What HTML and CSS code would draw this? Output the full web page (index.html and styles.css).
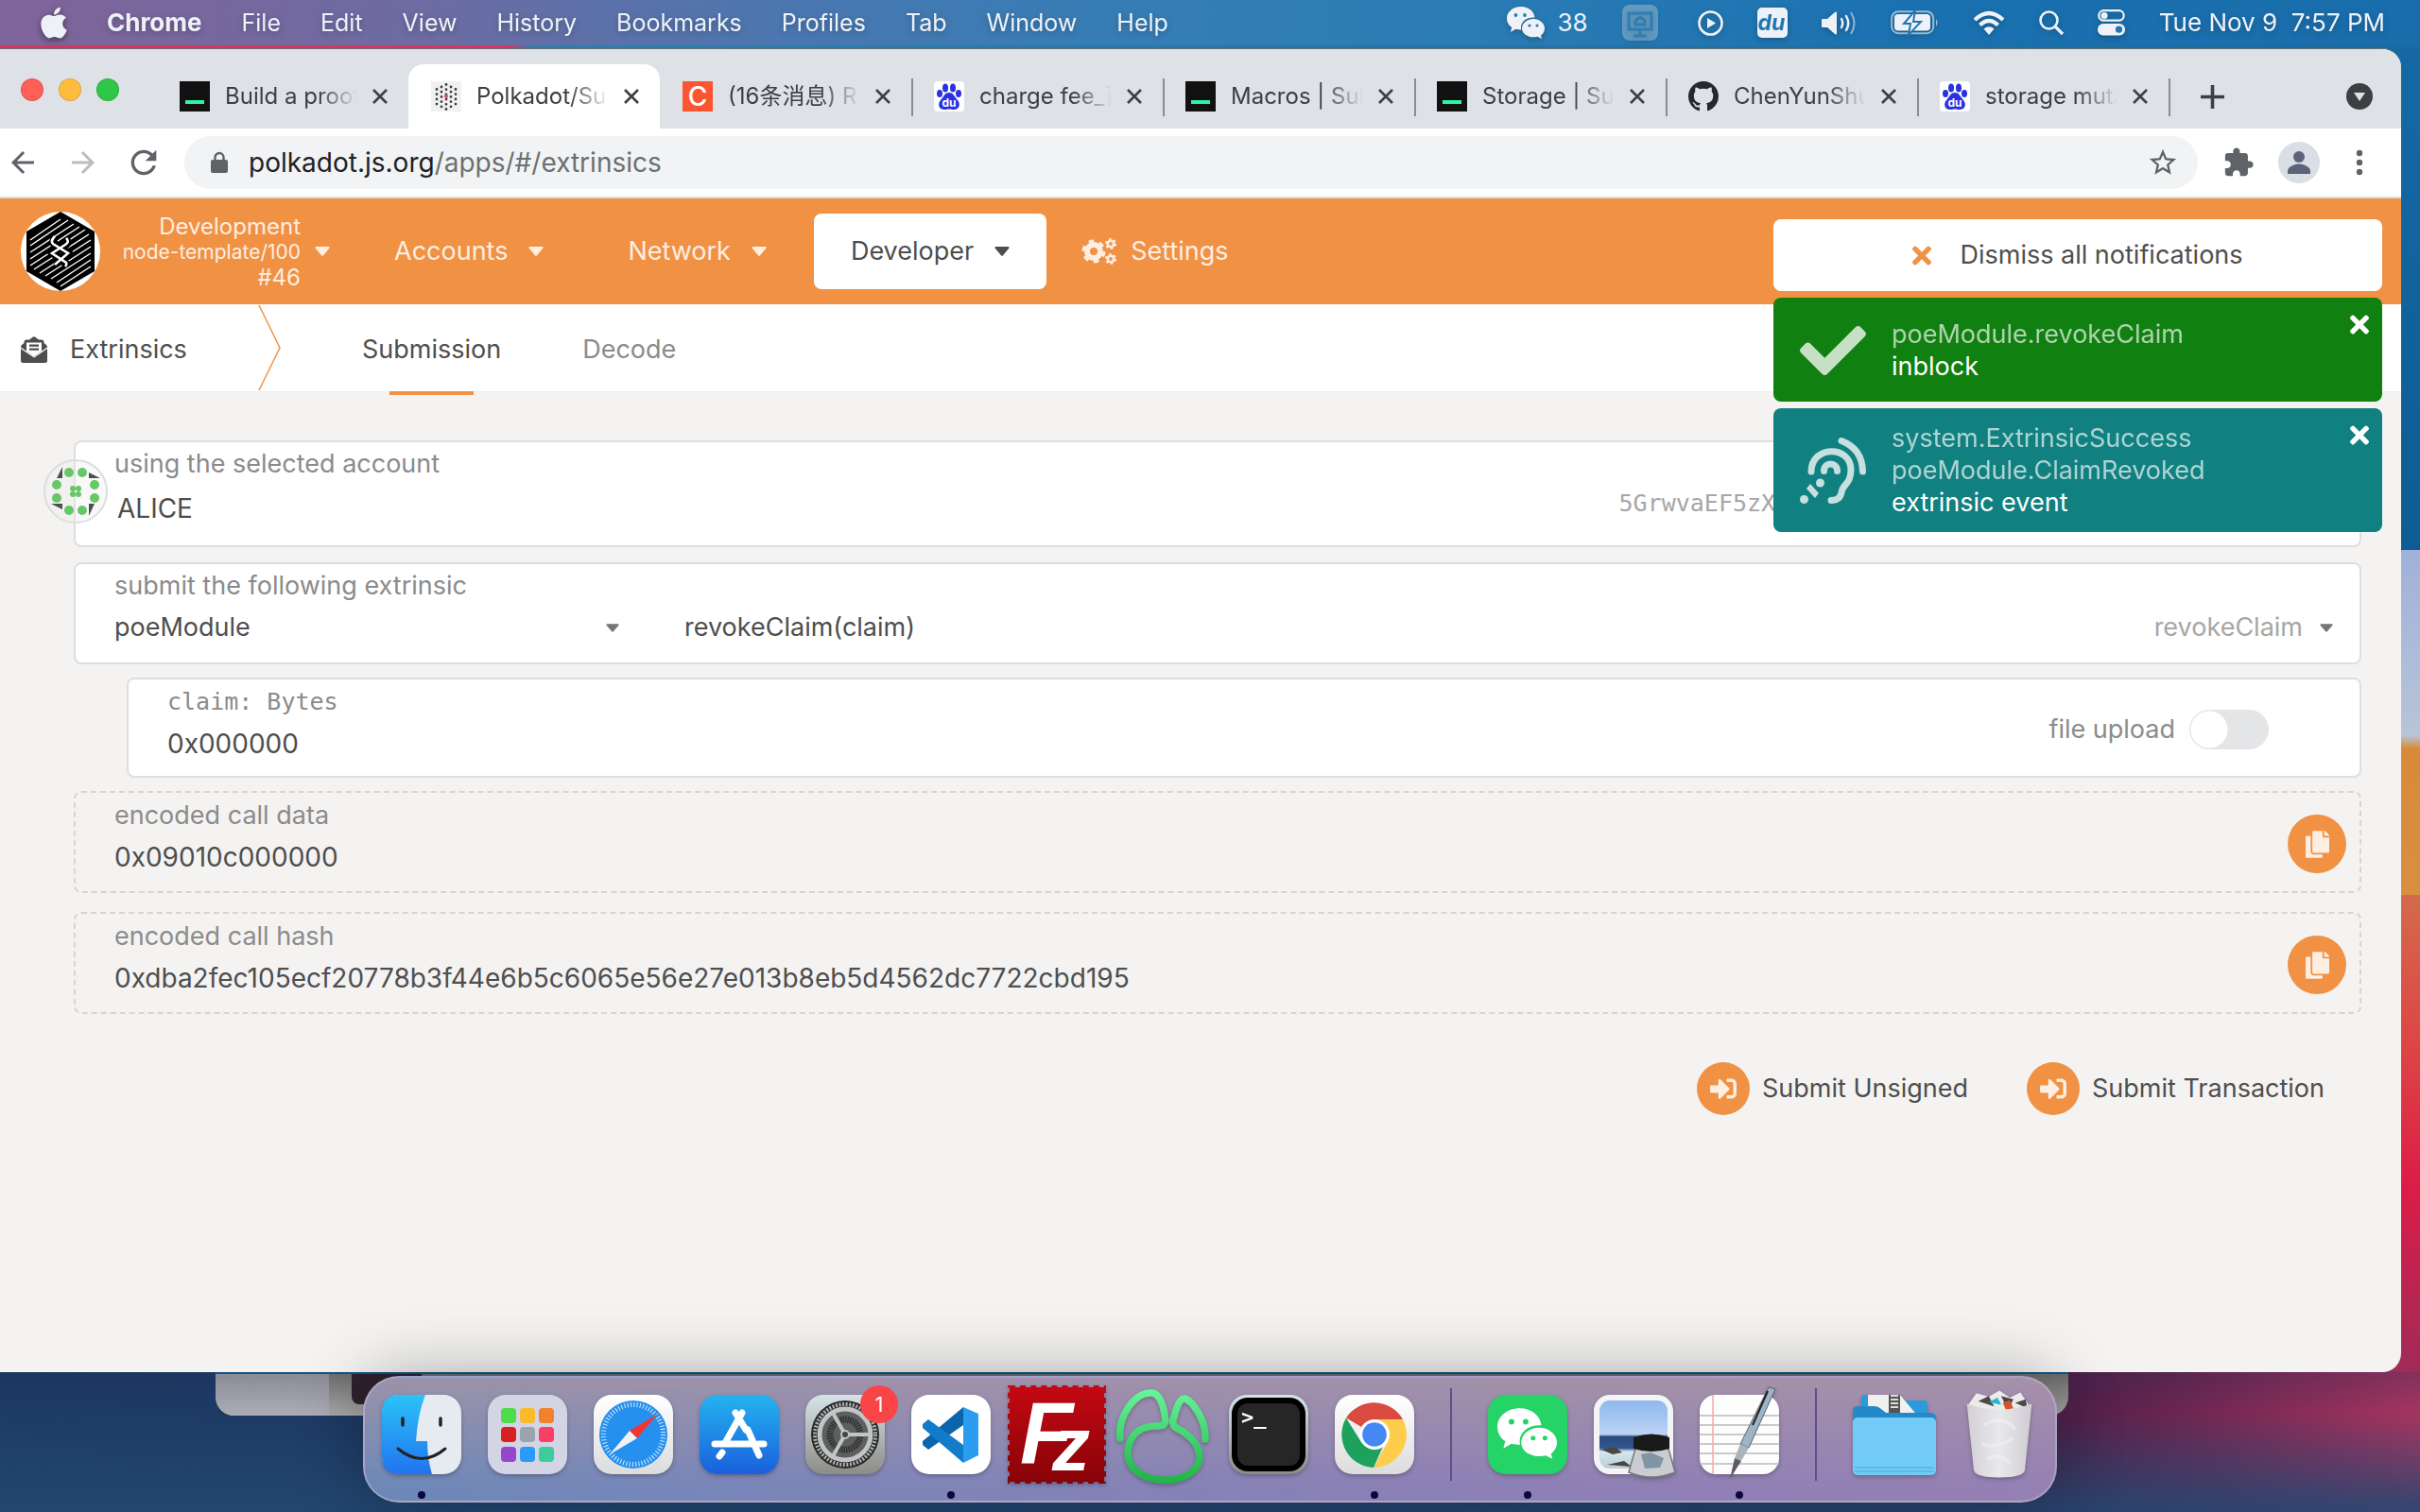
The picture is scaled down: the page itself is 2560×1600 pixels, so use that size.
FILE: index.html
```html
<!DOCTYPE html>
<html lang="en">
<head>
<meta charset="utf-8">
<title>Polkadot/Substrate Portal</title>
<link rel="stylesheet" href="styles.css">
</head>
<body>
<svg class="defs" width="0" height="0" aria-hidden="true">
  <defs>
    <symbol id="i-close" viewBox="0 0 16 16"><path d="M1 1l14 14M15 1L1 15" stroke="currentColor" stroke-width="2.6" fill="none"/></symbol>
    <symbol id="i-caret" viewBox="0 0 16 10"><path d="M1 0h14q1 1 .3 1.800L9 9.300q-1 1-2 0L.7 1.800Q0 1 1 0z" fill="currentColor"/></symbol>
    <symbol id="i-times" viewBox="0 0 352 512"><path fill="currentColor" d="M242.720 256l100.070-100.070c12.280-12.280 12.280-32.190 0-44.480l-22.240-22.240c-12.280-12.280-32.190-12.280-44.480 0L176 189.280 75.930 89.210c-12.280-12.280-32.190-12.280-44.480 0L9.210 111.450c-12.280 12.280-12.280 32.190 0 44.480L109.280 256 9.210 356.070c-12.280 12.280-12.280 32.190 0 44.480l22.240 22.240c12.280 12.280 32.200 12.280 44.480 0L176 322.720l100.070 100.070c12.280 12.280 32.200 12.280 44.480 0l22.240-22.240c12.280-12.280 12.280-32.190 0-44.480L242.720 256z"/></symbol>
    <symbol id="i-copy" viewBox="0 0 448 512"><path fill="currentColor" d="M320 448v40c0 13.255-10.745 24-24 24H24c-13.255 0-24-10.745-24-24V120c0-13.255 10.745-24 24-24h72v296c0 30.879 25.121 56 56 56h168zm0-344V0H152c-13.255 0-24 10.745-24 24v368c0 13.255 10.745 24 24 24h272c13.255 0 24-10.745 24-24V128H344c-13.200 0-24-10.800-24-24zm120.971-31.029L375.029 7.029A24 24 0 0 0 358.059 0H352v96h96v-6.059a24 24 0 0 0-7.029-16.970z"/></symbol>
    <symbol id="i-signin" viewBox="0 0 512 512"><path fill="currentColor" d="M416 448h-84c-6.600 0-12-5.400-12-12v-40c0-6.600 5.400-12 12-12h84c17.700 0 32-14.300 32-32V160c0-17.700-14.300-32-32-32h-84c-6.600 0-12-5.400-12-12V76c0-6.600 5.400-12 12-12h84c53 0 96 43 96 96v192c0 53-43 96-96 96zm-47-201L201 79c-15-15-41-4.500-41 17v96H24c-13.300 0-24 10.700-24 24v96c0 13.300 10.700 24 24 24h136v96c0 21.500 26 32 41 17l168-168c9.300-9.400 9.300-24.600 0-34z"/></symbol>
    <symbol id="i-terminal-tab" viewBox="0 0 32 32"><path fill="#111" d="M0 0h32v32H0z"/><path fill="#2df5a5" d="M6 20h20v4H6z"/></symbol>
    <symbol id="i-baidu" viewBox="0 0 32 32"><rect width="32" height="32" rx="4" fill="#fff"/><g fill="#2932e1"><ellipse cx="12" cy="7" rx="3" ry="4.500"/><ellipse cx="20" cy="7" rx="3" ry="4.500"/><ellipse cx="6" cy="13" rx="3" ry="4"/><ellipse cx="26" cy="13" rx="3" ry="4"/><path d="M16 12c5 0 6 5 9 8 4 5 1 10-4 10-2 0-3-.6-5-.6s-3 .6-5 .6c-5 0-8-5-4-10 3-3 4-8 9-8z"/></g><text x="16" y="27" text-anchor="middle" font-family="Inter, sans-serif" font-size="12" font-weight="700" fill="#fff">du</text></symbol>
    <symbol id="i-wechat" viewBox="0 0 40 34"><path fill="currentColor" d="M15 0c8 0 14 5 14.500 11.500C21 11 15 16 15 22c0 1 .1 1.500.4 2.500-2 .1-4-.1-6-.7L4 27l1.300-5C2 20 0 16.500 0 12.500 0 5.500 6.500 0 15 0z"/><path fill="currentColor" d="M28 13c6.600 0 12 4.500 12 10 0 3-1.500 5.600-4 7.500L37 34l-4.500-2.200c-8 2-16.500-2-16.500-8.800 0-5.500 5.400-10 12-10z"/><g fill="var(--eye)"><circle cx="9.500" cy="9" r="1.900"/><circle cx="19" cy="9" r="1.900"/><circle cx="24" cy="20" r="1.600"/><circle cx="32" cy="20" r="1.600"/></g></symbol>
    <linearGradient id="g-blue" x1="0" y1="0" x2="0" y2="1"><stop offset="0" stop-color="#2bc3f8"/><stop offset="1" stop-color="#2173f0"/></linearGradient>
    <linearGradient id="g-store" x1="0" y1="0" x2="0" y2="1"><stop offset="0" stop-color="#24b3f0"/><stop offset="1" stop-color="#1a5fdc"/></linearGradient>
    <linearGradient id="g-grey" x1="0" y1="0" x2="0" y2="1"><stop offset="0" stop-color="#d5e4e8"/><stop offset="1" stop-color="#8d8b87"/></linearGradient>
    <linearGradient id="g-white" x1="0" y1="0" x2="0" y2="1"><stop offset="0" stop-color="#fff"/><stop offset="1" stop-color="#dcdcdc"/></linearGradient>
    <linearGradient id="g-red" x1="0" y1="0" x2="0" y2="1"><stop offset="0" stop-color="#c40812"/><stop offset="1" stop-color="#870308"/></linearGradient>
    <linearGradient id="g-green" gradientUnits="userSpaceOnUse" x1="0" y1="0" x2="0" y2="100"><stop offset="0" stop-color="#6bf79f"/><stop offset="1" stop-color="#22b548"/></linearGradient>
    <linearGradient id="g-sea" x1="0" y1="0" x2="0" y2="1"><stop offset="0" stop-color="#8fb8ee"/><stop offset=".5" stop-color="#bcd4f4"/><stop offset=".53" stop-color="#2c4880"/><stop offset=".7" stop-color="#32568f"/><stop offset=".75" stop-color="#d5e8ef"/><stop offset="1" stop-color="#b9ccd4"/></linearGradient>
    <linearGradient id="g-bin" x1="0" y1="0" x2="1" y2="0"><stop offset="0" stop-color="#d3d0d6"/><stop offset=".5" stop-color="#e9e8ea"/><stop offset="1" stop-color="#cfccd2"/></linearGradient>
  </defs>
</svg>

<header class="menubar">
  <nav class="menus">
    <button class="apple" aria-label="Apple menu"><svg width="28" height="36" viewBox="0 20 384 470"><path fill="currentColor" d="M318.700 268.700c-.2-36.700 16.400-64.400 50-84.800-18.800-26.900-47.200-41.700-84.700-44.600-35.500-2.800-74.300 20.700-88.500 20.700-15 0-49.400-19.700-76.400-19.700C63.300 141.200 4 184.800 4 273.500q0 39.300 14.400 81.200c12.800 36.700 59 126.700 107.200 125.200 25.200-.6 43-17.900 75.800-17.900 31.800 0 48.300 17.900 76.400 17.900 48.600-.7 90.400-82.500 102.600-119.300-65.200-30.700-61.700-90-61.700-91.900zm-56.600-164.200c27.300-32.400 24.800-61.900 24-72.500-24.100 1.400-52 16.400-67.900 34.900-17.500 19.800-27.800 44.300-25.600 71.900 26.100 2 49.900-11.400 69.500-34.300z"/></svg></button>
    <button class="app-name">Chrome</button>
    <button>File</button><button>Edit</button><button>View</button><button>History</button><button>Bookmarks</button><button>Profiles</button><button>Tab</button><button>Window</button><button>Help</button>
  </nav>
  <div class="status">
    <span class="wechat-count"><svg width="40" height="34"><use href="#i-wechat"/></svg>38</span>
    <svg class="dim" width="38" height="38" viewBox="0 0 38 38"><rect width="38" height="38" rx="8" fill="#fff" opacity=".28"/><path d="M7 9h24v17H7zM19 26v6M12 33h14M14 21v-4l5-4 5 4v4z" fill="none" stroke="#2f7db3" stroke-width="3"/></svg>
    <svg width="27" height="27" viewBox="0 0 27 27"><circle cx="13.500" cy="13.500" r="12" fill="none" stroke="currentColor" stroke-width="2.600"/><path fill="currentColor" d="M10 8l9 5.500-9 5.500z"/></svg>
    <svg width="32" height="32" viewBox="0 0 32 32"><rect width="32" height="32" rx="5" fill="currentColor"/><text x="15" y="24" text-anchor="middle" font-family="Inter, sans-serif" font-style="italic" font-weight="700" font-size="23" fill="#2276b0">du</text></svg>
    <svg width="37" height="27" viewBox="0 0 37 27"><path fill="currentColor" d="M1 9h5l8-7c1-1 2-.5 2 1v21c0 1.500-1 2-2 1l-8-7H1q-1 0-1-1v-7q0-1 1-1z"/><path d="M21 9q2.500 4.500 0 9M26 6q4.500 7.500 0 15" fill="none" stroke="currentColor" stroke-width="2.400" stroke-linecap="round"/><path d="M31 2q7 11.500 0 23" fill="none" stroke="currentColor" stroke-width="2.200" opacity=".5"/></svg>
    <svg width="51" height="26" viewBox="0 0 51 26"><rect x="1.200" y="1.200" width="44" height="23" rx="7" fill="none" stroke="currentColor" stroke-width="2" opacity=".6"/><path d="M48 9q3 4 0 8z" fill="currentColor" opacity=".6"/><rect x="4" y="4" width="38" height="17.500" rx="4" fill="currentColor"/><path d="M26 0L14 14h7l-2 12 13-14h-8z" fill="currentColor" stroke="#2276b0" stroke-width="2"/></svg>
    <svg width="34" height="25" viewBox="0 0 34 25"><path d="M2 9q15-14 30 0M7.500 14.500q9.500-9 19 0" fill="none" stroke="currentColor" stroke-width="4.200"/><path fill="currentColor" d="M11.500 18.500q5.500-4.500 11 0L17 25z"/></svg>
    <svg width="26" height="26" viewBox="0 0 26 26"><circle cx="10.500" cy="10.500" r="9" fill="none" stroke="currentColor" stroke-width="2.600"/><path d="M17 17l8 8" stroke="currentColor" stroke-width="3.200"/></svg>
    <svg width="29" height="28" viewBox="0 0 29 28"><rect x="1.200" y="1.200" width="26.500" height="10.500" rx="5.200" fill="none" stroke="currentColor" stroke-width="2.200"/><circle cx="7" cy="6.500" r="3.600" fill="currentColor"/><rect y="15" width="29" height="12.500" rx="6" fill="currentColor"/><circle cx="22.500" cy="21.200" r="3.600" fill="#2276b0"/></svg>
    <time class="clock">Tue Nov 9&nbsp; 7:57 PM</time>
  </div>
</header>

<div class="desktop">
<div class="window">
  <div class="tabstrip">
    <div class="lights"><i class="red"></i><i class="amber"></i><i class="green"></i></div>
    <div class="tabs">
      <div class="tab"><svg class="fav"><use href="#i-terminal-tab"/></svg><span class="title">Build a proof</span><button aria-label="Close tab"><svg><use href="#i-close"/></svg></button></div>
      <div class="tab active"><svg class="fav" viewBox="0 0 32 32"><path fill="#f1f1f1" d="M0 0h32v32H0z"/><g stroke="#3c3c3c" stroke-width="2.800" stroke-linecap="round" fill="none" stroke-dasharray="0 5.200"><path d="M16 3.500v27M11 6v22M21 6v22M6 8.500v17M26 8.500v17"/></g><circle cx="16" cy="16" r="2" fill="#e6429b"/></svg><span class="title">Polkadot/Sub</span><button aria-label="Close tab"><svg><use href="#i-close"/></svg></button></div>
      <div class="tab"><svg class="fav" viewBox="0 0 32 32"><path fill="#fc5531" d="M0 0h32v32H0z"/><text x="16" y="26" text-anchor="middle" font-family="Inter, sans-serif" font-size="28" font-weight="500" fill="#fff">C</text></svg><span class="title">(16条消息) R</span><button aria-label="Close tab"><svg><use href="#i-close"/></svg></button></div>
      <div class="tab split"><svg class="fav"><use href="#i-baidu"/></svg><span class="title">charge fee_百</span><button aria-label="Close tab"><svg><use href="#i-close"/></svg></button></div>
      <div class="tab split"><svg class="fav"><use href="#i-terminal-tab"/></svg><span class="title">Macros | Sub</span><button aria-label="Close tab"><svg><use href="#i-close"/></svg></button></div>
      <div class="tab split"><svg class="fav"><use href="#i-terminal-tab"/></svg><span class="title">Storage | Su</span><button aria-label="Close tab"><svg><use href="#i-close"/></svg></button></div>
      <div class="tab split"><svg class="fav" viewBox="0 0 16 16"><path fill="#24292e" d="M8 0C3.580 0 0 3.580 0 8c0 3.540 2.290 6.530 5.470 7.590.4.070.55-.17.55-.38 0-.19-.01-.82-.01-1.490-2.010.37-2.530-.49-2.690-.94-.09-.23-.48-.94-.82-1.130-.28-.15-.68-.52-.01-.53.630-.01 1.080.58 1.230.82.720 1.210 1.870.87 2.330.66.070-.52.280-.87.510-1.070-1.780-.2-3.640-.89-3.640-3.950 0-.87.310-1.590.820-2.150-.08-.2-.36-1.020.080-2.120 0 0 .67-.21 2.200.82.640-.18 1.320-.27 2-.27s1.360.090 2 .27c1.530-1.040 2.200-.82 2.200-.82.440 1.100.160 1.920.080 2.120.510.560.820 1.270.820 2.150 0 3.070-1.870 3.750-3.650 3.950.290.250.540.730.540 1.480 0 1.070-.01 1.930-.01 2.200 0 .21.150.460.550.380A8.010 8.010 0 0 0 16 8c0-4.420-3.580-8-8-8z"/></svg><span class="title">ChenYunShu</span><button aria-label="Close tab"><svg><use href="#i-close"/></svg></button></div>
      <div class="tab split"><svg class="fav"><use href="#i-baidu"/></svg><span class="title">storage muta</span><button aria-label="Close tab"><svg><use href="#i-close"/></svg></button></div>
      <div class="tab-new"><button aria-label="New tab"><svg width="25" height="25" viewBox="0 0 25 25"><path d="M12.500 0v25M0 12.500h25" stroke="currentColor" stroke-width="3.600"/></svg></button></div>
    </div>
    <button class="tab-search" aria-label="Search tabs"><svg width="28" height="28" viewBox="0 0 28 28"><circle cx="14" cy="14" r="14" fill="#3c4043"/><path d="M8 10h12l-6 9z" fill="#dee1e6"/></svg></button>
  </div>
  <div class="toolbar">
    <button aria-label="Back"><svg width="36" height="36" viewBox="0 0 24 24"><path fill="#5f6368" d="M20 11H7.830l5.590-5.590L12 4l-8 8 8 8 1.410-1.410L7.830 13H20v-2z"/></svg></button>
    <button aria-label="Forward"><svg width="36" height="36" viewBox="0 0 24 24"><path fill="#babcbe" d="M12 4l-1.410 1.410L16.170 11H4v2h12.170l-5.580 5.590L12 20l8-8z"/></svg></button>
    <button class="reload" aria-label="Reload"><svg width="40" height="40" viewBox="0 0 24 24"><path fill="#5f6368" d="M17.650 6.350C16.200 4.900 14.210 4 12 4c-4.420 0-7.990 3.580-7.990 8s3.570 8 7.990 8c3.730 0 6.840-2.550 7.730-6h-2.080c-.82 2.330-3.040 4-5.650 4-3.310 0-6-2.690-6-6s2.690-6 6-6c1.660 0 3.140.690 4.220 1.780L13 11h7V4l-2.350 2.350z"/></svg></button>
    <div class="omnibox">
      <svg width="18" height="22" viewBox="0 0 18 22"><rect y="8" width="18" height="14" rx="2" fill="#5f6368"/><path d="M4.500 9V5.500a4.500 4.500 0 0 1 9 0V9" fill="none" stroke="#5f6368" stroke-width="2.400"/></svg>
      <span class="url"><b>polkadot.js.org</b>/apps/#/extrinsics</span>
      <button aria-label="Bookmark this tab"><svg width="34" height="34" viewBox="0 0 24 24"><path fill="#5f6368" d="M22 9.240l-7.190-.62L12 2 9.190 8.630 2 9.240l5.460 4.730L5.820 21 12 17.270 18.180 21l-1.630-7.030L22 9.240zM12 15.400l-3.760 2.270 1-4.280-3.320-2.880 4.380-.38L12 6.100l1.710 4.040 4.380.38-3.320 2.880 1 4.280L12 15.400z"/></svg></button>
    </div>
    <button class="extensions" aria-label="Extensions"><svg width="34" height="34" viewBox="0 0 24 24"><path fill="#5f6368" d="M20.500 11H19V7c0-1.100-.9-2-2-2h-4V3.500C13 2.120 11.880 1 10.500 1S8 2.120 8 3.500V5H4c-1.100 0-1.990.9-1.990 2v3.800H3.500c1.490 0 2.700 1.210 2.700 2.700s-1.210 2.700-2.700 2.700H2V20c0 1.100.9 2 2 2h3.800v-1.500c0-1.490 1.210-2.700 2.700-2.700 1.490 0 2.700 1.210 2.700 2.700V22H17c1.100 0 2-.9 2-2v-4h1.500c1.380 0 2.500-1.120 2.500-2.500S21.880 11 20.500 11z"/></svg></button>
    <button class="profile" aria-label="Profile"><svg width="44" height="44" viewBox="0 0 44 44"><circle cx="22" cy="22" r="22" fill="#dadee5"/><circle cx="22" cy="16" r="6" fill="#5a6378"/><path d="M10 34v-3c0-5 8-7.500 12-7.500s12 2.500 12 7.500v3z" fill="#5a6378"/></svg></button>
    <button class="more" aria-label="More"><svg width="8" height="28" viewBox="0 0 8 28"><g fill="#5f6368"><circle cx="4" cy="4" r="3.200"/><circle cx="4" cy="14" r="3.200"/><circle cx="4" cy="24" r="3.200"/></g></svg></button>
  </div>

  <div class="page">
    <header class="app-header">
      <button class="chain">
        <svg width="84" height="84" viewBox="0 0 84 84"><circle cx="42" cy="42" r="42" fill="#fff"/><path d="M42 0l36 21v42L42 84 6 63V21z" fill="#000"/><g stroke="#fff" stroke-width="1.400"><path d="M42 8L10 30M50 9L10 36M56 13L10 43M62 16L10 50M68 19L10 57M72 24L14 61M74 30L20 65M74 37L26 68M74 44L32 71M74 51L38 75M74 58L42 79"/></g><path d="M37 28q-4 3-2 6l15 10-14 12M47 28q4 4 1 7L34 44l15 12" fill="none" stroke="#000" stroke-width="8"/><path d="M36 26q-5 5-2 8l16 10-14 12M48 28q4 4-1 7L33 44l15 10q1 2-1 4" fill="none" stroke="#fff" stroke-width="2.600"/></svg>
        <span class="chain-info"><span>Development</span><small>node-template/100</small><span>#46</span></span>
        <svg class="caret"><use href="#i-caret"/></svg>
      </button>
      <nav class="nav">
        <button>Accounts<svg class="caret"><use href="#i-caret"/></svg></button>
        <button>Network<svg class="caret"><use href="#i-caret"/></svg></button>
        <button class="on">Developer<svg class="caret"><use href="#i-caret"/></svg></button>
        <a class="settings" href="#/settings"><svg width="36" height="28" viewBox="0 0 36 28"><g fill="none" stroke="currentColor"><circle cx="12" cy="14" r="7" stroke-width="6"/><circle cx="12" cy="14" r="10.500" stroke-width="4" stroke-dasharray="5.500 5.500"/><circle cx="30" cy="6" r="3.200" stroke-width="2.600"/><circle cx="30" cy="6" r="5" stroke-width="2" stroke-dasharray="2.620 2.620"/><circle cx="30" cy="22" r="3.200" stroke-width="2.600"/><circle cx="30" cy="22" r="5" stroke-width="2" stroke-dasharray="2.620 2.620"/></g></svg>Settings</a>
      </nav>
    </header>
    <nav class="subnav">
      <span class="section"><svg width="28" height="28" viewBox="0 0 28 28"><path fill="currentColor" d="M0 13l14 9.500L28 13v12.500q0 2.500-2.500 2.500h-23Q0 28 0 25.500z"/><path fill="currentColor" d="M11 2q3-3.500 6 0l2 1.500h3q2.500 0 2.500 2.500v1l2 1.500q1.500 1 1.500 3L14 21 0 11.500q0-2 1.500-3l2-1.500V6q0-2.500 2.500-2.500h3z"/><path fill="#fff" d="M6 6.500h16v9L14 21l-8-5.500z"/><path fill="currentColor" d="M9 8.500h10v2.200H9zM9 12.500h10v2.200H9z"/></svg>Extrinsics</span>
      <svg class="arrow" width="23" height="92" viewBox="0 0 23 92"><path d="M0 1l22 45L0 91" fill="none" stroke="#f19143" stroke-width="1.500"/></svg>
      <a class="current" href="#/extrinsics">Submission</a>
      <a href="#/extrinsics/decode">Decode</a>
    </nav>

    <main class="content">
      <div class="field account">
        <svg class="identicon" width="68" height="68" viewBox="0 0 68 68"><circle cx="34" cy="34" r="33" fill="#eee" fill-opacity=".35" stroke="#ddd" stroke-width="2"/><g fill="#64c867"><circle cx="27" cy="14" r="5"/><circle cx="41" cy="14" r="5"/><circle cx="14" cy="27" r="5"/><circle cx="54" cy="27" r="5"/><circle cx="14" cy="41" r="5"/><circle cx="54" cy="41" r="5"/><circle cx="27" cy="54" r="5"/><circle cx="41" cy="54" r="5"/><circle cx="31" cy="31" r="3"/><circle cx="37" cy="31" r="3"/><circle cx="31" cy="37" r="3"/><circle cx="37" cy="37" r="3"/></g><path fill="#4e4e4e" d="M20 8v12h-6zM48 14l12 6H48zM8 47h12v6zM48 47h6l-6 13z"/></svg>
        <label for="account">using the selected account</label>
        <div class="value"><input id="account" value="ALICE"><span class="address">5GrwvaEF5zXb26Fz9rcQpDWS57CtERHpNehXCPcNoHGKutQY</span></div>
      </div>
      <div class="field extrinsic">
        <label for="module">submit the following extrinsic</label>
        <div class="value">
          <span class="pick module"><select id="module"><option>poeModule</option></select><svg class="caret"><use href="#i-caret"/></svg></span>
          <span class="pick method"><select aria-label="Method"><option>revokeClaim(claim)</option></select><span class="hint">revokeClaim</span><svg class="caret"><use href="#i-caret"/></svg></span>
        </div>
      </div>
      <div class="field param">
        <div class="stack"><label class="mono" for="claim">claim: Bytes</label>
        <div class="value"><input id="claim" value="0x000000"></div></div>
        <label class="upload">file upload<input type="checkbox" role="switch"></label>
      </div>
      <div class="field result">
        <div class="stack"><label for="calldata">encoded call data</label><output id="calldata">0x09010c000000</output></div>
        <button class="round" aria-label="Copy"><svg><use href="#i-copy"/></svg></button>
      </div>
      <div class="field result">
        <div class="stack"><label for="callhash">encoded call hash</label><output id="callhash">0xdba2fec105ecf20778b3f44e6b5c6065e56e27e013b8eb5d4562dc7722cbd195</output></div>
        <button class="round" aria-label="Copy"><svg><use href="#i-copy"/></svg></button>
      </div>
      <div class="actions">
        <button><span class="disc"><svg><use href="#i-signin"/></svg></span>Submit Unsigned</button>
        <button><span class="disc"><svg><use href="#i-signin"/></svg></span>Submit Transaction</button>
      </div>
    </main>

    <aside class="toasts">
      <button class="dismiss"><svg><use href="#i-times"/></svg>Dismiss all notifications</button>
      <div class="toast ok">
        <svg class="mark" viewBox="0 0 512 512"><path fill="currentColor" d="M173.898 439.404l-166.400-166.400c-9.997-9.997-9.997-26.206 0-36.204l36.203-36.204c9.997-9.998 26.207-9.998 36.204 0L192 312.690 432.095 72.596c9.997-9.997 26.207-9.997 36.204 0l36.203 36.204c9.997 9.997 9.997 26.206 0 36.204l-294.400 294.401c-9.998 9.997-26.207 9.997-36.204-.001z"/></svg>
        <p><span>poeModule.revokeClaim</span>inblock</p>
        <button aria-label="Dismiss"><svg><use href="#i-times"/></svg></button>
      </div>
      <div class="toast event">
        <svg class="mark" viewBox="0 0 70 70"><g fill="none" stroke="currentColor" stroke-width="7" stroke-linecap="round"><path d="M12 36C12 8 54 8 54 34c0 16-9 15-10 24-1 6-5 8.500-11 8.500"/><path d="M25.500 35.500c0-10 14-10 14 0M44 3.500Q66 12 66.500 36" /></g><circle cx="4.500" cy="65.500" r="4.500" fill="currentColor"/><circle cx="21.500" cy="48" r="4.500" fill="currentColor"/><path d="M7 54l4-5 9 10-4 5z" fill="currentColor"/></svg>
        <p><span>system.ExtrinsicSuccess</span><span>poeModule.ClaimRevoked</span>extrinsic event</p>
        <button aria-label="Dismiss"><svg><use href="#i-times"/></svg></button>
      </div>
    </aside>
  </div>
</div>
</div>

<footer class="shelf">
  <div class="behind"><div class="pane"></div><div class="thumb"></div></div>
  <nav class="dock">
    <button class="run" aria-label="Finder"><svg viewBox="0 0 84 84"><rect width="84" height="84" rx="19" fill="#e6ebf2"/><path d="M19 0h27q-8 20-10 49h12q0 18 5 35H19Q0 84 0 65V19Q0 0 19 0z" fill="url(#g-blue)"/><path d="M22 25v7M62 25v7" stroke="#222" stroke-width="3.500" stroke-linecap="round"/><path d="M17 57q25 21 50 0" fill="none" stroke="#222" stroke-width="3" stroke-linecap="round"/></svg></button>
    <button aria-label="Launchpad"><svg viewBox="0 0 84 84"><rect width="84" height="84" rx="19" fill="#d3d5e4"/><rect x="14" y="14" width="16" height="16" rx="4" fill="#4fdc4c"/><rect x="34" y="14" width="16" height="16" rx="4" fill="#fbb92c"/><rect x="54" y="14" width="16" height="16" rx="4" fill="#f2812d"/><rect x="14" y="34" width="16" height="16" rx="4" fill="#d81f22"/><rect x="34" y="34" width="16" height="16" rx="4" fill="#9ba4ab"/><rect x="54" y="34" width="16" height="16" rx="4" fill="#f93f63"/><rect x="14" y="55" width="16" height="16" rx="4" fill="#9646cb"/><rect x="34" y="55" width="16" height="16" rx="4" fill="#2a9bf8"/><rect x="54" y="55" width="16" height="16" rx="4" fill="#3dcd9d"/></svg></button>
    <button aria-label="Safari"><svg viewBox="0 0 84 84"><rect width="84" height="84" rx="19" fill="url(#g-white)"/><circle cx="42" cy="42" r="36" fill="#2690ee"/><circle cx="42" cy="42" r="31.500" fill="none" stroke="#d8ecff" stroke-width="5" stroke-dasharray="1 2.300"/><path d="M68 20L46 46l-8-8z" fill="#f0372f"/><path d="M17 63l21-25 8 8z" fill="#f2f2f2"/></svg></button>
    <button aria-label="App Store"><svg viewBox="0 0 84 84"><rect width="84" height="84" rx="19" fill="url(#g-store)"/><g stroke="#fff" stroke-width="7" stroke-linecap="round"><path d="M45 19L27 51M38 19l11 18M51 37l12 27M16 52h38M62 52h6M24 61l-3 4"/></g></svg></button>
    <button aria-label="System Preferences"><svg viewBox="0 0 84 84"><rect width="84" height="84" rx="19" fill="url(#g-grey)"/><circle cx="42" cy="42" r="36" fill="#292929"/><circle cx="42" cy="42" r="32" fill="none" stroke="#aeb2b2" stroke-width="4" stroke-dasharray="2 1.600"/><circle cx="42" cy="42" r="27" fill="#5e5f60" stroke="#c1c5c5" stroke-width="5"/><circle cx="42" cy="42" r="16" fill="none" stroke="#303030" stroke-width="7" stroke-dasharray="1.500 1"/><path d="M42 42h27M42 42L29 19M42 42L29 65" stroke="#c1c5c5" stroke-width="4"/><circle cx="42" cy="42" r="4" fill="#444" stroke="#c1c5c5" stroke-width="2"/></svg><span class="badge">1</span></button>
    <button class="run" aria-label="Visual Studio Code"><svg viewBox="0 0 84 84"><rect width="84" height="84" rx="19" fill="#fff"/><path d="M55 13v19L18 58l-6-5v-4z" fill="#0a65ac"/><path d="M12 35v-4l6-5 37 27v19z" fill="#127ccb"/><path d="M55 13l16 7v44l-16 8z" fill="#2b9df0"/></svg></button>
    <button class="wide" aria-label="FileZilla"><svg viewBox="0 0 104 104"><rect x="2" y="2" width="100" height="100" fill="url(#g-red)"/><rect x="2" y="2" width="100" height="100" fill="none" stroke="url(#g-red)" stroke-width="4" stroke-dasharray="6 5.100"/><text x="50" y="82" text-anchor="middle" font-family="Liberation Sans, sans-serif" font-size="92" font-style="italic" font-weight="700" fill="#fff">F<tspan font-size="80" dx="-22" dy="8">z</tspan></text></svg></button>
    <button class="wide" aria-label="Database client"><svg viewBox="0 0 104 104"><g fill="none" stroke="url(#g-green)" stroke-width="7.500" stroke-linecap="round" stroke-linejoin="round"><path d="M7 56C4 34 22 6 41 8q11 2 14 30-1 5-7 5C28 42 16 52 15 72c2 38 75 36 76 4 0-16-16-27-25-31-4-3-4-7-2-12 4-14 7-19 11-19 8 2 23 22 22 43"/></g></svg></button>
    <button aria-label="Terminal"><svg viewBox="0 0 84 84"><rect width="84" height="84" rx="19" fill="url(#g-grey)"/><rect x="3" y="3" width="78" height="78" rx="17" fill="#000"/><rect x="9" y="9" width="66" height="66" rx="11" fill="#262626"/><text x="13" y="31" font-family="DejaVu Sans Mono, monospace" font-weight="700" font-size="22" fill="#fff">&gt;_</text></svg></button>
    <button class="run" aria-label="Google Chrome"><svg viewBox="0 0 84 84"><rect width="84" height="84" rx="19" fill="url(#g-white)"/><path d="M42 42L12 24.500A35 35 0 0 1 72 26H42z" fill="#db4a40"/><path d="M42 42V26h30a35 35 0 0 1-31 51l15-27z" fill="#fecd4b"/><path d="M12 24.500L28 50l13 4 11-2-11 25A35 35 0 0 1 12 24.500z" fill="#1fa15e"/><circle cx="42" cy="42" r="16" fill="#fff"/><circle cx="42" cy="42" r="12.800" fill="#4587f3"/></svg></button>
    <i class="rule"></i>
    <button class="run" aria-label="WeChat"><svg viewBox="0 0 84 84"><rect width="84" height="84" rx="19" fill="#25d366"/><use href="#i-wechat" x="10" y="14" width="63" height="54"/></svg></button>
    <button aria-label="Preview"><svg viewBox="0 0 84 84"><rect width="84" height="84" rx="17" fill="#f4f4f4"/><rect x="6" y="6" width="72" height="72" rx="11" fill="url(#g-sea)"/><path d="M8 58l14-3 8 6-10 2zM14 74l18-4 8 6z" fill="#494643"/><path d="M44 57h35l7 25q-25 10-49 0z" fill="#c9cdd2" stroke="#777" stroke-width="1.500"/><path d="M50 63l10-2 14 6-4 10-16 1z" fill="#8295a5"/><path d="M42 45q19-7 38 0v12q-19 6-38 0z" fill="#1a1a1a"/></svg></button>
    <button class="run" aria-label="TextEdit"><svg viewBox="0 0 84 84"><rect width="84" height="84" rx="17" fill="#fdfdfd"/><path d="M0 22h84M0 32h84M0 42h84M0 52h84M0 62h84M0 73h84" stroke="#b9b9b9" stroke-width="1.500"/><path d="M14 0v84" stroke="#f3a9a9" stroke-width="1.500"/><path d="M73-8l7 2-28 62-9-4z" fill="#9db4c6" stroke="#58646e"/><path d="M43 52l9 4-8 14-7-3z" fill="#aab4bc"/><path d="M37 67l7 3-12 19z" fill="#5c5c60"/><path d="M72-4L56 32" stroke="#222" stroke-width="2"/></svg></button>
    <i class="rule"></i>
    <button class="folder" aria-label="Downloads"><svg viewBox="0 0 88 88"><path d="M9 6q0-4 4-4h8l6 6h48q4 0 4 4v12H9z" fill="#2a9ad9"/><path d="M16 2h34l20 24H16z" fill="#f0f0ef"/><path d="M38 2h12v20H38z" fill="#555"/><path d="M40 3h8M40 7h8M40 11h8M40 15h8" stroke="#ddd" stroke-width="2"/><path d="M0 19q0-5 5-5h18q4 0 7 3l5 4h47q6 0 6 6v20H0z" fill="#2489c8"/><rect y="26" width="88" height="61" rx="5" fill="#72cbf6"/><path d="M2 79h84M2 83h84" stroke="#58b4e4" stroke-width="1.500"/></svg></button>
    <button class="trash" aria-label="Trash"><svg viewBox="0 0 84 100"><path d="M6 17L16 3l14 4L42 0l12 8L66 2l10 15-8 10H14z" fill="#eceaea"/><path d="M18 12l12-6 6 12zM44 6l14 4-6 12zM60 14l12-4 2 10z" fill="#4c4849"/><path d="M30 13l10-5 4 8z" fill="#25b6d5"/><path d="M46 14l8-3 4 9-8 3z" fill="#d3562b"/><path d="M5 15q37 13 74 0l-8 76q-2 8-29 8t-29-8z" fill="url(#g-bin)"/><path d="M24 40q20-14 36 4M22 60q14 8 36-6M28 78q12-8 26 4" stroke="#f7f7f7" stroke-width="4" fill="none" opacity=".4"/></svg></button>
  </nav>
</footer>
</body>
</html>
```
FILE: styles.css
```css
:root {
  --orange: #f19143;
  --ink: #4e4e4e;
  --label: #8b8b8b;
  --eye: #2b7cb4;
}
* { box-sizing: border-box; }
body {
  margin: 0;
  min-height: 100vh;
  display: flex;
  flex-direction: column;
  font-family: Inter, "Noto Sans CJK SC", sans-serif;
  font-size: 27px;
  line-height: 32px;
  color: var(--ink);
  background: #1a5f98;
}
button, input, select { font: inherit; color: inherit; background: none; border: 0; padding: 0; margin: 0; }
button, a { display: flex; align-items: center; text-decoration: none; color: inherit; white-space: nowrap; }
svg { display: block; flex: none; overflow: visible; }
.defs { position: absolute; }

/* macOS menu bar */
.menubar {
  display: flex;
  justify-content: space-between;
  height: 48px;
  padding: 0 37px 0 43px;
  color: #eef2f8;
  font-size: 26px;
  background: linear-gradient(to right, #80649a 0, #6c6ca3 18%, #4a77b0 33%, #377db5 45%, #2c7cb5 60%, #1a71b0 80%, #1a6dab 100%);
}
.menubar svg, .menubar button, .clock { filter: drop-shadow(0 2px 3px rgba(0, 0, 0, .25)); }
.menus { display: flex; gap: 42px; font-size: 25px; }
.menus .app-name { font-size: 26px; font-weight: 700; }
.status { display: flex; align-items: center; gap: 36px; }
.wechat-count { display: flex; align-items: center; gap: 14px; }
.dim { margin-right: 6px; }
.clock { white-space: nowrap; }

/* wallpaper behind the browser window */
.desktop {
  flex: 1;
  display: flex;
  padding: 3px 20px 0 0;
  background:
    linear-gradient(to right, #d8345e 21%, #2a7fb0 22%, #1a6aa0) top / 100% 4px no-repeat,
    linear-gradient(to bottom, #1469a5 0, #0e5c93 38%, #a0b1d9 38%, #b7c4d8 52%, #d88a3a 53%, #d88f40 64%, #d46a4c 64%, #dc4444 76%, #dc1c48 86%, #a02b58 100%);
}
.window {
  flex: 1;
  min-width: 0;
  display: flex;
  flex-direction: column;
  overflow: hidden;
  border-top: 1px solid #6a6e74;
  border-radius: 0 20px 20px 0;
  background: #f4f3f2;
}

/* Chrome */
.tabstrip { display: flex; height: 84px; padding: 16px 30px 0 22px; background: #dee1e6; color: #3c4043; font-size: 24px; }
.lights { display: flex; gap: 16px; width: 144px; padding-top: 15px; }
.lights i { width: 24px; height: 24px; border-radius: 50%; border: 1px solid rgba(0, 0, 0, .12); }
.red { background: #ff5f57; }
.amber { background: #febc3f; }
.green { background: #30c748; }
.tabs { flex: 1; display: flex; min-width: 0; }
.tab { display: flex; align-items: center; width: 266px; padding: 0 21px 0 24px; position: relative; }
.tab.active { background: #fff; border-radius: 16px 16px 0 0; }
.tab.split::before, .tab-new::before { content: ""; position: absolute; left: 0; top: 15px; width: 2px; height: 40px; background: #898d92; }
.fav { width: 32px; height: 32px; margin-right: 16px; }
.title {
  width: 140px;
  margin-right: 16px;
  overflow: hidden;
  white-space: nowrap;
  mask-image: linear-gradient(to right, #000 70%, transparent);
}
.tab button svg { width: 16px; height: 16px; }
.tab-new { display: flex; position: relative; padding-left: 34px; }
.toolbar {
  display: flex;
  align-items: center;
  height: 74px;
  padding: 0 40px 0 6px;
  background: #fff;
  border-bottom: 2px solid #dadce0;
}
.toolbar > button { margin-right: 28px; }
.toolbar > button:nth-of-type(2) { margin-right: 26px; }
.toolbar > .reload { margin-right: 23px; }
.omnibox { flex: 1; display: flex; align-items: center; height: 56px; margin-right: 26px; padding: 0 20px 0 28px; border-radius: 28px; background: #f1f3f4; font-size: 28px; }
.url { flex: 1; margin-left: 22px; color: #6b6f73; }
.url b { font-weight: 400; color: #202124; }
.toolbar > .extensions { margin-right: 25px; }
.toolbar > .profile { margin-right: 38px; }
.toolbar > .more { margin-right: 0; }

/* polkadot.js apps */
.page { flex: 1; position: relative; }
.app-header { display: flex; align-items: center; height: 112px; padding-left: 22px; background: var(--orange); color: #fdeee2; }
.caret { width: 16px; height: 10px; }
.chain { width: 356px; gap: 15px; }
.chain-info { display: flex; flex-direction: column; flex: 1; text-align: right; font-size: 24px; line-height: 27px; }
.chain-info small { font-size: 21px; }
.chain > .caret { margin-right: 29px; }
.nav { display: flex; gap: 11px; }
.nav > * { height: 80px; padding: 0 39px; border-radius: 8px; }
.nav button { gap: 22px; }
.nav .on { background: #fff; color: var(--ink); }
.nav .settings { padding: 0 27px; gap: 15px; }
.subnav { display: flex; height: 93px; padding-left: 22px; background: #fff; border-bottom: 1px solid #efeeee; }
.section, .subnav a { padding-top: 4px; }
.section { display: flex; align-items: center; gap: 24px; width: 252px; }
.subnav a { position: relative; margin-left: 86px; color: var(--label); }
.subnav .current { color: var(--ink); }
.subnav .current::after { content: ""; position: absolute; left: 20%; right: 20%; bottom: -4px; height: 4px; background: var(--orange); }

.content { padding: 51px 42px 0 78px; }
.field { position: relative; display: flex; flex-direction: column; gap: 12px; height: 108px; padding: 7px 42px 0 41px; border: 2px solid #dedede; border-radius: 8px; background: #fff; margin-bottom: 14px; }
.field label { color: var(--label); }
.value { display: flex; align-items: center; }
.value input { flex: 1; min-width: 0; height: 32px; }
.value input, output { font-size: 28px; }
.account { height: 113px; gap: 15px; margin-bottom: 16px; }
.account input { padding-left: 3px; }
.identicon { position: absolute; left: -34px; top: 18px; }
.address, .field .mono { font-family: "DejaVu Sans Mono", monospace; font-size: 25px; }
.address { align-self: flex-start; line-height: 22px; color: #a6a6a6; margin-right: 19px; }
.pick { display: flex; align-items: center; }
.pick select { flex: 1; appearance: none; height: 32px; }
.pick .caret { width: 14px; height: 9px; color: #767676; }
.module { width: 534px; margin-right: 69px; }
.method { flex: 1; margin-right: -14px; }
.hint { color: #a6a6a6; margin-right: 18px; }
.stack { flex: 1; display: flex; flex-direction: column; gap: 12px; }
.param, .result { flex-direction: row; padding-top: 8px; }
.param { height: 106px; margin-left: 56px; }
.upload { display: flex; align-items: center; align-self: flex-start; gap: 15px; padding: 24px 54px 0 0; }
.upload input { appearance: none; width: 84px; height: 42px; border-radius: 21px; background: radial-gradient(circle at 21px 21px, #fff 19px, #e4e5e7 20px); }
.result { margin-bottom: 20px; padding-right: 14px; border: 2px dashed #d5d5d4; background: none; }
.round { justify-content: center; width: 62px; height: 62px; margin-top: 15px; border-radius: 50%; background: var(--orange); color: #fdeee2; }
.round svg { width: 25px; height: 29px; }
.actions { display: flex; justify-content: flex-end; gap: 62px; padding: 31px 39px 40px 0; }
.actions button { gap: 13px; }
.disc { display: flex; align-items: center; justify-content: center; width: 56px; height: 56px; border-radius: 50%; background: var(--orange); color: #fdeee2; }
.disc svg { width: 28px; height: 28px; }

/* notifications float over the page */
.toasts { position: absolute; top: 22px; right: 20px; width: 644px; display: flex; flex-direction: column; gap: 7px; color: #fff; line-height: 34px; }
.toasts > * { border-radius: 8px; }
.dismiss { justify-content: center; gap: 30px; height: 76px; background: #fff; color: var(--ink); }
.dismiss svg { width: 20px; height: 29px; color: var(--orange); }
.toast { position: relative; display: flex; align-items: center; padding: 15px 28px 14px; gap: 27px; }
.ok { min-height: 110px; background: #108010; }
.event { min-height: 130px; background: #108080; }
.mark { width: 70px; height: 70px; opacity: .76; }
.toast p { margin: 0; }
.toast p span { display: block; opacity: .66; }
.toast button { position: absolute; right: 14px; top: 14px; }
.toast button svg { width: 20px; height: 29px; }

/* dock and the strip of desktop under the window */
.shelf {
  position: relative;
  display: flex;
  justify-content: center;
  padding: 4px 0 10px;
  background:
    linear-gradient(to bottom, rgba(32, 38, 80, .25) 0, transparent 30%, rgba(35, 72, 114, .85) 95%),
    linear-gradient(to right, #1c3c66 0, #22345f 60%, #55204a 86%, #a53560 100%);
}
.behind { position: absolute; left: 228px; right: 372px; top: 0; height: 46px; border-radius: 0 0 20px 20px; overflow: hidden; display: flex; background: linear-gradient(to bottom, #6d6d6c, #aaa); border-top: 2px solid #0b5587; }
.pane { width: 120px; background: linear-gradient(to bottom, #8b8b98, #adadb8); }
.thumb { width: 74px; height: 32px; margin-left: 24px; border-radius: 0 0 8px 8px; background: #30222e; }
.dock {
  position: relative;
  display: flex;
  align-items: center;
  gap: 28px;
  height: 134px;
  padding: 0 20px 10px 18px;
  border: 2px solid rgba(205, 195, 225, .45);
  border-radius: 38px;
  background:
    linear-gradient(to bottom, rgba(170, 150, 165, .75), transparent 90%),
    linear-gradient(to right, #6c88b8, #8084b8 35%, #8a80b6 60%, #9680b4);
  box-shadow: 0 0 70px rgba(0, 0, 0, .32);
}
.dock button { position: relative; --eye: #25d366; color: #fff; }
.dock svg { width: 84px; height: 84px; filter: drop-shadow(0 2px 2px rgba(0, 0, 0, .25)); }
.dock .wide { margin: 0 -10px; }
.dock .wide svg { width: 104px; height: 104px; }
.dock .folder svg { width: 88px; height: 88px; }
.dock .trash svg { width: 78px; height: 96px; }
.rule { width: 2px; height: 98px; margin: 0 10px; background: #5d5088; }
.run::after { content: ""; position: absolute; left: 50%; bottom: -26px; width: 8px; height: 8px; margin-left: -4px; border-radius: 50%; background: #0d0640; }
.badge { position: absolute; right: -14px; top: -10px; width: 40px; height: 40px; border-radius: 50%; background: #f94545; color: #fff; font-size: 22px; line-height: 40px; text-align: center; }
```
